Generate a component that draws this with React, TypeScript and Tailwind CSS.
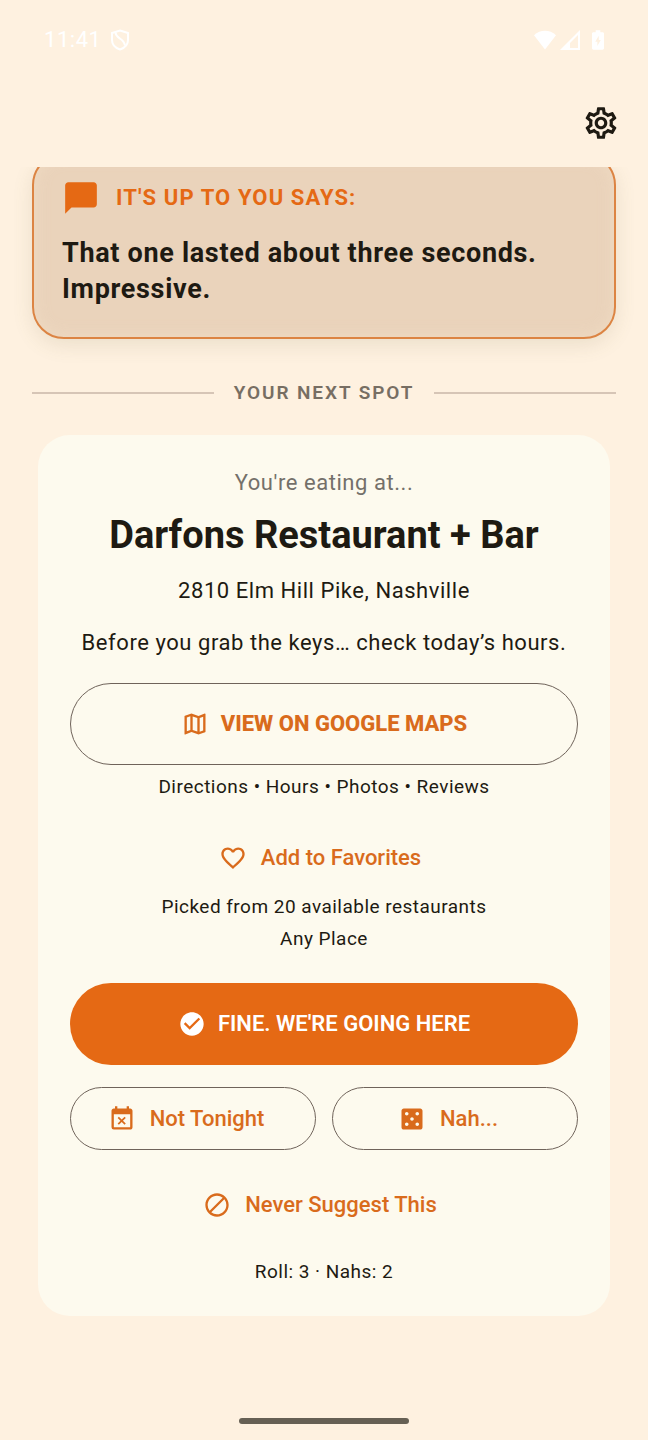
import type { ReactNode } from "react";
import {
    MdBlock,
    MdCasino,
    MdChatBubble,
    MdCheckCircle,
    MdEventBusy,
    MdFavoriteBorder,
    MdOutlineMap,
    MdOutlineSettings,
} from "react-icons/md";

function StatusBar() {
    return (
        <div className="flex h-20 items-center justify-between pr-11 pl-11 text-white">
            <div className="flex items-center gap-2">
                <span className="text-[22px] leading-8 tracking-wide">11:41</span>
                {/* Privacy shield */}
                <svg width="20" height="22" viewBox="0 0 20 22" fill="none" stroke="currentColor" strokeWidth="2">
                    <path d="M10 1.500 18 4v7c0 4.500-3.500 8-8 9.500C5.500 19 2 15.500 2 11V4z" />
                    <path d="M5.500 3.500c.5 7 8 4.500 9.500 13" />
                </svg>
            </div>
            <div className="flex items-center gap-1">
                <svg width="22" height="20" viewBox="0 0 22 20" fill="currentColor">
                    <path d="M11 19.500 0 5.200C3.200 2.300 7 .800 11 .800s7.800 1.500 11 4.400z" />
                </svg>
                <svg width="20" height="20" viewBox="0 0 20 20" fill="currentColor">
                    <path fillRule="evenodd" d="M0 20 20 0v20zM10 18h8V5l-8 8z" />
                </svg>
                <svg className="ml-2" width="12" height="20" viewBox="0 0 13 21" fill="currentColor">
                    <path
                        fillRule="evenodd"
                        d="M4 0h5v2h2.500c.8 0 1.500.7 1.500 1.500v16c0 .8-.7 1.500-1.500 1.500h-10C.700 21 0 20.300 0 19.500v-16C0 2.700.700 2 1.500 2H4zM7.300 6 3.500 12.500h2.300V17l3.700-6.500H7.300z"
                    />
                </svg>
            </div>
        </div>
    );
}

function OutlineButton({ icon, className, children }: { icon: ReactNode; className: string; children: ReactNode }) {
    return (
        <button
            className={`flex w-full items-center justify-center rounded-full border border-[#6f635a] text-[22px] leading-8 text-[#d96b1c] ${className}`}
        >
            {icon}
            {children}
        </button>
    );
}

function TextButton({ icon, className, children }: { icon: ReactNode; className: string; children: ReactNode }) {
    return (
        <button
            className={`flex h-[62px] items-center justify-center gap-3.5 pr-2 text-[22px] leading-8 font-medium text-[#d96b1c] ${className}`}
        >
            {icon}
            {children}
        </button>
    );
}

export default function App() {
    return (
        <div className="flex min-h-screen flex-col bg-[#fef1e0] font-['Roboto',sans-serif] text-[#1e1a12]">
            <StatusBar />
            <header className="flex h-[87px] justify-end px-7 pt-6">
                <button aria-label="Settings" className="h-[38px]">
                    <MdOutlineSettings size={38} />
                </button>
            </header>

            <main className="overflow-hidden px-8 pb-10">
                {/* Callout, partly scrolled under the header */}
                <section className="-mt-3.5 rounded-[32px] border-2 border-[#dc8443] bg-[#ead3bb] px-7 pt-6 pb-[30px] shadow-[0_6px_20px_rgba(120,110,70,0.14),inset_0_0_16px_rgba(240,220,196,0.8)]">
                    <div className="flex items-center gap-4 text-[#e56914]">
                        <MdChatBubble size={38} />
                        <h2 className="text-[22px] leading-8 font-bold tracking-wider">IT'S UP TO YOU SAYS:</h2>
                    </div>
                    <p className="mt-[18px] text-[27px] leading-9 font-bold tracking-wide">
                        That one lasted about three seconds. Impressive.
                    </p>
                </section>

                <div className="mt-10 flex items-center gap-5">
                    <div className="h-0.5 flex-1 bg-[#d6c5b6]" />
                    <h3 className="text-[19px] leading-7 font-semibold tracking-widest text-[#776e63]">YOUR NEXT SPOT</h3>
                    <div className="h-0.5 flex-1 bg-[#d6c5b6]" />
                </div>

                <section className="mx-1.5 mt-7 flex flex-col rounded-[32px] bg-[#fdfaee] px-8 pt-8 pb-8 text-center">
                    <p className="text-[22px] leading-8 tracking-wide text-[#74706a]">You're eating at...</p>
                    <h1 className="mt-3 text-[38px] leading-[48px] font-bold">Darfons Restaurant + Bar</h1>
                    <p className="mt-4 text-[22px] leading-8 tracking-wide">2810 Elm Hill Pike, Nashville</p>
                    <p className="mt-5 text-[22px] leading-8 tracking-wide">Before you grab the keys… check today’s hours.</p>

                    <OutlineButton icon={<MdOutlineMap size={28} />} className="mt-6 h-[82px] gap-3 font-extrabold">
                        VIEW ON GOOGLE MAPS
                    </OutlineButton>
                    <p className="mt-2.5 text-[19px] leading-6 tracking-wide">Directions • Hours • Photos • Reviews</p>

                    <TextButton icon={<MdFavoriteBorder size={28} />} className="mt-7">
                        Add to Favorites
                    </TextButton>
                    <p className="mt-1.5 text-[19px] leading-6 tracking-wide">Picked from 20 available restaurants</p>
                    <p className="mt-2 text-[19px] leading-6 tracking-wide">Any Place</p>

                    <button className="mt-8 flex h-[82px] w-full items-center justify-center gap-3 rounded-full bg-[#e56914] text-[22px] leading-8 font-semibold text-white">
                        <MdCheckCircle size={28} />
                        FINE. WE'RE GOING HERE
                    </button>

                    <div className="mt-[22px] grid grid-cols-2 gap-4">
                        <OutlineButton icon={<MdEventBusy size={28} />} className="h-[63px] gap-3.5 pr-3.5 font-medium">
                            Not Tonight
                        </OutlineButton>
                        <OutlineButton icon={<MdCasino size={28} />} className="h-[63px] gap-3.5 pr-3.5 font-medium">
                            Nah...
                        </OutlineButton>
                    </div>

                    <TextButton icon={<MdBlock size={28} />} className="mt-6">
                        Never Suggest This
                    </TextButton>
                    <p className="mt-6 text-[19px] leading-6 tracking-wide">Roll: 3 · Nahs: 2</p>
                </section>
            </main>

            {/* Gesture handle */}
            <div className="mt-auto flex justify-center pb-4">
                <div className="h-1.5 w-[170px] rounded-full bg-[#666054]" />
            </div>
        </div>
    );
}
